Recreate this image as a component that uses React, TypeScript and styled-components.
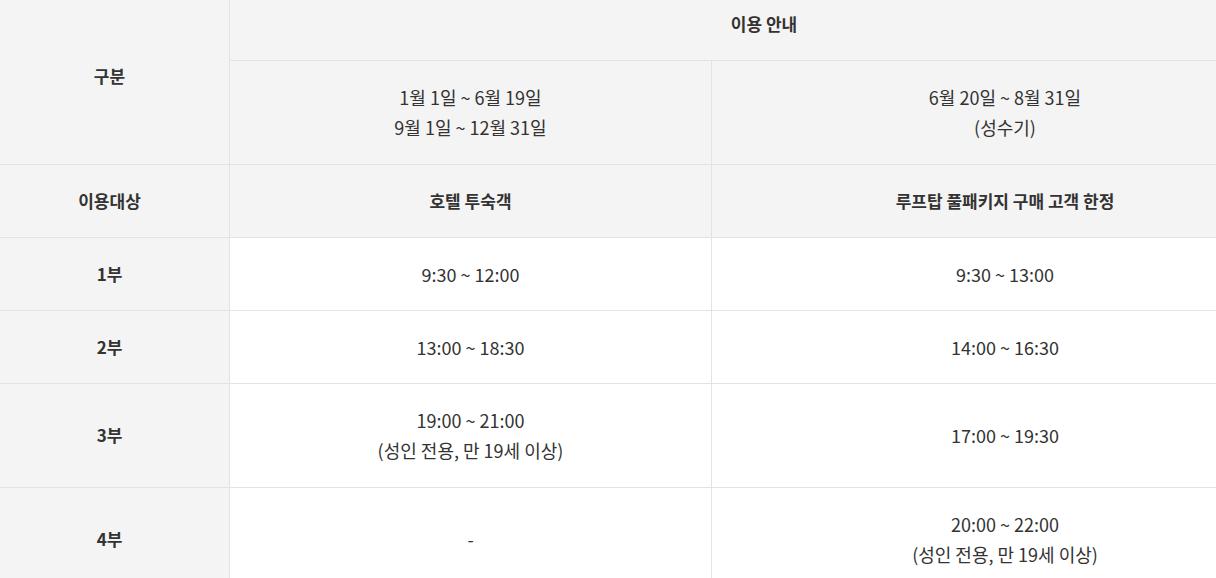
import React from "react";
import styled, { createGlobalStyle } from "styled-components";

const GlobalStyle = createGlobalStyle`
  html, body {
    margin: 0;
    padding: 0;
    background: #fff;
    overflow: hidden;
  }
  body {
    font-family: "Noto Sans CJK KR", "Noto Sans", sans-serif;
    color: #333;
  }
`;

const Wrapper = styled.div`
  width: 1216px;
  height: 578px;
  overflow: hidden;
`;

const Table = styled.table`
  margin: -13px 0 0 -11px;
  width: 1309px;
  table-layout: fixed;
  border-collapse: collapse;
  font-size: 17px;
  line-height: 30px;
`;

const Th = styled.th<{ $light?: boolean }>`
  background: #f4f4f4;
  border: 1px solid #e3e3e3;
  padding: 21px 10px 21.3px;
  font-size: ${(p) => (p.$light ? "18px" : "17px")};
  font-weight: ${(p) => (p.$light ? 400 : 700)};
  text-align: center;
  vertical-align: middle;
  color: #333;
`;

const Td = styled.td`
  background: #fff;
  border: 1px solid #e3e3e3;
  padding: 21px 10px 21.3px;
  font-size: 18px;
  font-weight: 400;
  text-align: center;
  vertical-align: middle;
  color: #333;
`;

type Slot = { label: string; hotel: string[]; rooftop: string[] };

const slots: Slot[] = [
  { label: "1부", hotel: ["9:30 ~ 12:00"], rooftop: ["9:30 ~ 13:00"] },
  { label: "2부", hotel: ["13:00 ~ 18:30"], rooftop: ["14:00 ~ 16:30"] },
  {
    label: "3부",
    hotel: ["19:00 ~ 21:00", "(성인 전용, 만 19세 이상)"],
    rooftop: ["17:00 ~ 19:30"],
  },
  {
    label: "4부",
    hotel: ["-"],
    rooftop: ["20:00 ~ 22:00", "(성인 전용, 만 19세 이상)"],
  },
];

const Lines = ({ lines }: { lines: string[] }) => (
  <>
    {lines.map((l, i) => (
      <React.Fragment key={i}>
        {i > 0 && <br />}
        {l}
      </React.Fragment>
    ))}
  </>
);

export default function App() {
  return (
    <Wrapper>
      <GlobalStyle />
      <Table>
        <colgroup>
          <col style={{ width: 240 }} />
          <col style={{ width: 482 }} />
          <col style={{ width: 587 }} />
        </colgroup>
        <thead>
          <tr>
            <Th rowSpan={2}>구분</Th>
            <Th colSpan={2}>이용 안내</Th>
          </tr>
          <tr>
            <Th as="td" $light>
              <Lines lines={["1월 1일 ~ 6월 19일", "9월 1일 ~ 12월 31일"]} />
            </Th>
            <Th as="td" $light>
              <Lines lines={["6월 20일 ~ 8월 31일", "(성수기)"]} />
            </Th>
          </tr>
        </thead>
        <tbody>
          <tr>
            <Th>이용대상</Th>
            <Th>호텔 투숙객</Th>
            <Th>루프탑 풀패키지 구매 고객 한정</Th>
          </tr>
          {slots.map((s) => (
            <tr key={s.label}>
              <Th>{s.label}</Th>
              <Td>
                <Lines lines={s.hotel} />
              </Td>
              <Td>
                <Lines lines={s.rooftop} />
              </Td>
            </tr>
          ))}
        </tbody>
      </Table>
    </Wrapper>
  );
}
